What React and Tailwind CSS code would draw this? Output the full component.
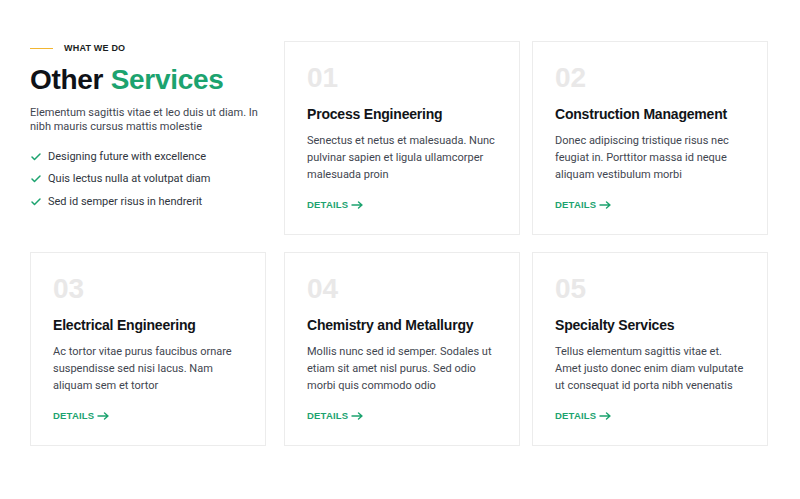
import { Check } from 'lucide-react'

const services = [
  {
    num: '01',
    title: 'Process Engineering',
    text: 'Senectus et netus et malesuada. Nunc pulvinar sapien et ligula ullamcorper malesuada proin',
  },
  {
    num: '02',
    title: 'Construction Management',
    text: 'Donec adipiscing tristique risus nec feugiat in. Porttitor massa id neque aliquam vestibulum morbi',
  },
  {
    num: '03',
    title: 'Electrical Engineering',
    text: 'Ac tortor vitae purus faucibus ornare suspendisse sed nisi lacus. Nam aliquam sem et tortor',
  },
  {
    num: '04',
    title: 'Chemistry and Metallurgy',
    text: 'Mollis nunc sed id semper. Sodales ut etiam sit amet nisl purus. Sed odio morbi quis commodo odio',
  },
  {
    num: '05',
    title: 'Specialty Services',
    text: 'Tellus elementum sagittis vitae et. Amet justo donec enim diam vulputate ut consequat id porta nibh venenatis',
  },
]

const points = [
  'Designing future with excellence',
  'Quis lectus nulla at volutpat diam',
  'Sed id semper risus in hendrerit',
]

const heading = { fontFamily: '"Liberation Sans", Arial, sans-serif' }

const ServiceCard = ({ item, className = '' }) => (
  <div className={`w-[236px] h-[194px] border border-[#ececec] bg-white pl-[22px] pr-[18px] pt-[21px] ${className}`}>
    <div className="text-[28px] leading-[30px] font-bold text-[#e9e8e8]" style={heading}>
      {item.num}
    </div>
    <h3 className="mt-[11px] text-[14px] leading-[20px] font-bold tracking-[-0.2px] text-[#111418]" style={heading}>
      {item.title}
    </h3>
    <p className="mt-[8px] text-[11px] leading-[17px] text-[#3f4650]">{item.text}</p>
    <a href="#" className="mt-[15px] inline-flex items-center gap-[3px] text-[9.5px] font-bold tracking-[0.2px] text-[#1ca36f]" style={heading}>
      DETAILS
      <svg width="12" height="8" viewBox="0 0 12 8" fill="none" stroke="currentColor" strokeWidth="1.4" strokeLinecap="round" strokeLinejoin="round">
        <path d="M1 4h10M7.5 1l3.5 3-3.5 3" />
      </svg>
    </a>
  </div>
)

const App = () => {
  return (
    <div className="min-h-[499px] w-[800px] bg-white pl-[30px] pt-[41px]" style={{ fontFamily: 'Roboto, sans-serif' }}>
      <div className="flex">
        <div className="w-[236px] pt-[1px]">
          <div className="flex items-center">
            <span className="h-px w-[23px] bg-[#f2b632]" />
            <span className="ml-[11px] text-[9px] font-bold tracking-[0.2px] text-[#1a1d21]" style={heading}>
              WHAT WE DO
            </span>
          </div>
          <h2 className="mt-[6px] text-[28px] leading-[36px] font-bold tracking-[-0.3px] text-[#0f1217]" style={heading}>
            Other <span className="text-[#1ca36f]">Services</span>
          </h2>
          <p className="mt-[8px] text-[11px] leading-[14px] text-[#3f4650]">
            Elementum sagittis vitae et leo duis ut diam. In nibh mauris cursus mattis molestie
          </p>
          <ul className="mt-[16px] space-y-[8px]">
            {points.map((p) => (
              <li key={p} className="flex items-center text-[11px] leading-[14.5px] text-[#2f353d]">
                <Check className="h-3 w-3 text-[#1ca36f] mr-[6px]" strokeWidth={3} />
                {p}
              </li>
            ))}
          </ul>
        </div>
        <ServiceCard item={services[0]} className="ml-[18px]" />
        <ServiceCard item={services[1]} className="ml-[12px]" />
      </div>
      <div className="mt-[17px] flex">
        <ServiceCard item={services[2]} />
        <ServiceCard item={services[3]} className="ml-[18px]" />
        <ServiceCard item={services[4]} className="ml-[12px]" />
      </div>
    </div>
  )
}

export default App
